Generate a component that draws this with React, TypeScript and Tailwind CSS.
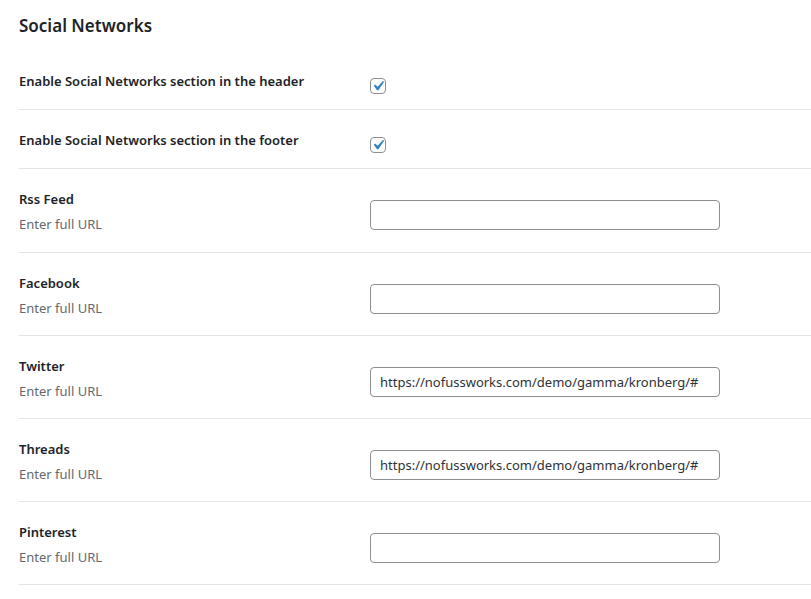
import { useState } from "react";

type Network = {
  name: string;
  value: string;
};

const networks: Network[] = [
  { name: "Rss Feed", value: "" },
  { name: "Facebook", value: "" },
  { name: "Twitter", value: "https://nofussworks.com/demo/gamma/kronberg/#" },
  { name: "Threads", value: "https://nofussworks.com/demo/gamma/kronberg/#" },
  { name: "Pinterest", value: "" },
];

function Checkbox({ checked, onChange }: { checked: boolean; onChange: () => void }) {
  return (
    <button
      type="button"
      onClick={onChange}
      className="flex h-4 w-4 items-center justify-center overflow-visible rounded-[4px] border border-[#8c8f94] bg-white"
    >
      {checked ? (
        <svg width="20" height="20" viewBox="0 0 20 20" className="-m-[3px] shrink-0 text-[#3582c4]">
          <path d="M14.83 4.89l1.34.94-5.81 8.38H9.02L5.78 9.67l1.34-1.25 2.57 2.4z" fill="currentColor" />
        </svg>
      ) : null}
    </button>
  );
}

export default function App() {
  const [header, setHeader] = useState(true);
  const [footer, setFooter] = useState(true);
  const [values, setValues] = useState(networks.map((n) => n.value));

  return (
    <div className="min-h-screen bg-white pl-[19px] font-['Noto_Sans','Open_Sans',sans-serif] text-[#1d2327]">
      <h2 className="pt-[14px] text-[17px] font-semibold leading-6">Social Networks</h2>

      <div className="mt-[13px]">
        {[
          { label: "Enable Social Networks section in the header", checked: header, toggle: () => setHeader(!header) },
          { label: "Enable Social Networks section in the footer", checked: footer, toggle: () => setFooter(!footer) },
        ].map((row) => (
          <div key={row.label} className="flex h-[59px] border-b border-[#e4e4e4]">
            <div className="w-[351px] pt-[21px] text-[13px] font-semibold leading-[18px]">{row.label}</div>
            <div className="pt-[27px]">
              <Checkbox checked={row.checked} onChange={row.toggle} />
            </div>
          </div>
        ))}

        {networks.map((n, i) => (
          <div key={n.name} className={`flex border-b border-[#e4e4e4] ${i === 0 ? "h-[84px]" : "h-[83px]"}`}>
            <div className="w-[351px] pt-[21px] leading-[18px]">
              <div className="text-[13px] font-semibold">{n.name}</div>
              <div className="mt-[7px] text-[13px] text-[#646970]">Enter full URL</div>
            </div>
            <div className="pt-[31px]">
              <input
                type="text"
                value={values[i]}
                onChange={(e) => setValues(values.map((v, j) => (j === i ? e.target.value : v)))}
                className="h-[30px] w-[350px] rounded-[4px] border border-[#8c8f94] px-[9px] text-[13px] text-[#2c3338] outline-none"
              />
            </div>
          </div>
        ))}
      </div>
    </div>
  );
}
